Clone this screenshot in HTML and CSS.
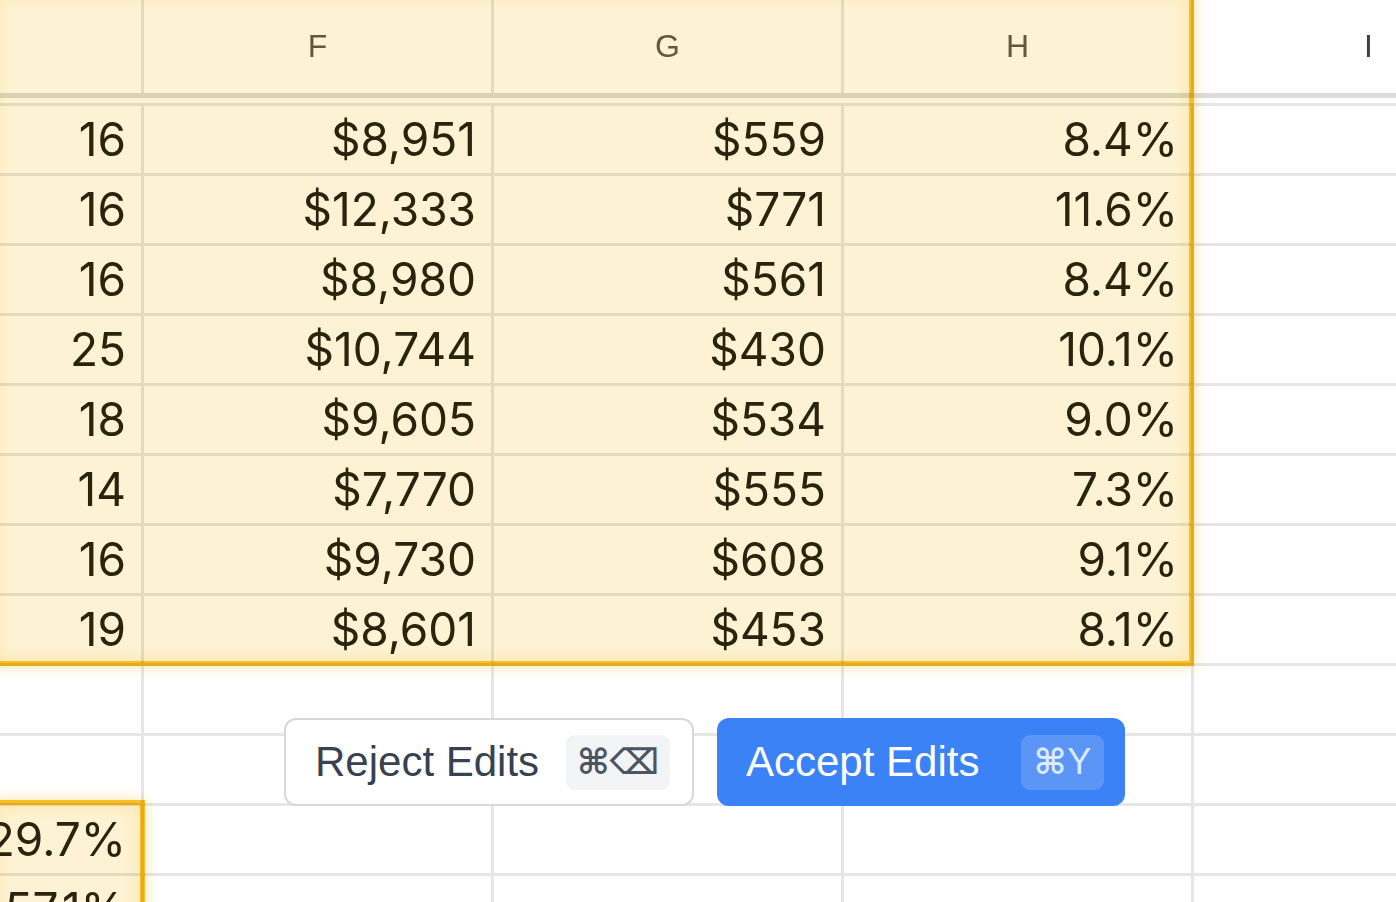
FILE: index.html
```html
<!DOCTYPE html>
<html>
<head>
<meta charset="utf-8">
<link rel="stylesheet" href="styles.css">
</head>
<body>
<div class="sheet">
  <div class="hdr-row">
    <div class="cell c-e"></div>
    <div class="cell c-f hsel">F</div>
    <div class="cell c-g hsel">G</div>
    <div class="cell c-h hsel">H</div>
    <div class="cell c-i">I</div>
  </div>
  <div class="hdr-gap"></div>
  <div class="row"><div class="cell c-e">16</div><div class="cell c-f">$8,951</div><div class="cell c-g">$559</div><div class="cell c-h">8.4%</div><div class="cell c-i"></div></div>
  <div class="row"><div class="cell c-e">16</div><div class="cell c-f">$12,333</div><div class="cell c-g">$771</div><div class="cell c-h">11.6%</div><div class="cell c-i"></div></div>
  <div class="row"><div class="cell c-e">16</div><div class="cell c-f">$8,980</div><div class="cell c-g">$561</div><div class="cell c-h">8.4%</div><div class="cell c-i"></div></div>
  <div class="row"><div class="cell c-e">25</div><div class="cell c-f">$10,744</div><div class="cell c-g">$430</div><div class="cell c-h">10.1%</div><div class="cell c-i"></div></div>
  <div class="row"><div class="cell c-e">18</div><div class="cell c-f">$9,605</div><div class="cell c-g">$534</div><div class="cell c-h">9.0%</div><div class="cell c-i"></div></div>
  <div class="row"><div class="cell c-e">14</div><div class="cell c-f">$7,770</div><div class="cell c-g">$555</div><div class="cell c-h">7.3%</div><div class="cell c-i"></div></div>
  <div class="row"><div class="cell c-e">16</div><div class="cell c-f">$9,730</div><div class="cell c-g">$608</div><div class="cell c-h">9.1%</div><div class="cell c-i"></div></div>
  <div class="row"><div class="cell c-e">19</div><div class="cell c-f">$8,601</div><div class="cell c-g">$453</div><div class="cell c-h">8.1%</div><div class="cell c-i"></div></div>
  <div class="row"><div class="cell c-e"></div><div class="cell c-f"></div><div class="cell c-g"></div><div class="cell c-h"></div><div class="cell c-i"></div></div>
  <div class="row"><div class="cell c-e"></div><div class="cell c-f"></div><div class="cell c-g"></div><div class="cell c-h"></div><div class="cell c-i"></div></div>
  <div class="row"><div class="cell c-e">29.7%</div><div class="cell c-f"></div><div class="cell c-g"></div><div class="cell c-h"></div><div class="cell c-i"></div></div>
  <div class="row"><div class="cell c-e">57.1%</div><div class="cell c-f"></div><div class="cell c-g"></div><div class="cell c-h"></div><div class="cell c-i"></div></div>

  <div class="sel sel-main"></div>
  <div class="sel sel-low"></div>

  <div class="actions">
    <button class="btn btn-reject">
      <span class="btn-label">Reject Edits</span>
      <span class="kbd kbd-reject">⌘⌫</span>
    </button>
    <button class="btn btn-accept">
      <span class="btn-label">Accept Edits</span>
      <span class="kbd kbd-accept">⌘<span class="kbd-y">Y</span></span>
    </button>
  </div>
</div>
</body>
</html>
```
FILE: styles.css
```css
html, body {
  margin: 0;
  padding: 0;
  background: #ffffff;
  overflow: hidden;
}

body {
  width: 1396px;
  height: 902px;
  font-family: "Liberation Sans", "DejaVu Sans", sans-serif;
}

.sheet {
  position: relative;
  width: 1396px;
  height: 902px;
  overflow: hidden;
}

.hdr-row {
  display: flex;
  height: 93px;
  border-bottom: 5px solid #dcdcdc;
}

.hdr-gap {
  height: 5px;
}

.row {
  display: flex;
  height: 67px;
  border-top: 3px solid #e6e6e6;
}

.cell {
  flex: none;
  box-sizing: border-box;
  display: flex;
  justify-content: flex-end;
  align-items: center;
  border-right: 3px solid #e6e6e6;
  padding-right: 15px;
  font-family: Inter, "Liberation Sans", sans-serif;
  font-size: 46px;
  line-height: 67px;
  color: #2a2410;
  white-space: nowrap;
  overflow: hidden;
}

.c-e { width: 144px; }
.c-f { width: 350px; }
.c-g { width: 350px; }
.c-h { width: 350px; padding-right: 13px; }
.c-i { width: 400px; }

.hdr-row .cell {
  justify-content: center;
  padding: 0;
  font-family: "Liberation Sans", sans-serif;
  font-size: 32px;
  line-height: 93px;
  color: #374151;
}

.hdr-row .cell.c-i {
  justify-content: flex-start;
  padding-left: 170px;
  border-right: none;
}

.hdr-row .hsel {
  color: #635c47;
}

.sel {
  position: absolute;
  box-sizing: border-box;
  border: 5px solid #fbbf24;
  background: #fdf3d4;
  mix-blend-mode: multiply;
  box-shadow: 0 0 12px rgba(251, 191, 36, 0.45), inset 0 0 18px rgba(251, 191, 36, 0.28);
  pointer-events: none;
}

.sel-main {
  left: -10px;
  top: -10px;
  width: 1204px;
  height: 676px;
}

.sel-low {
  left: -10px;
  top: 800px;
  width: 155px;
  height: 200px;
}

.actions {
  position: absolute;
  left: 284px;
  top: 718px;
  display: flex;
  gap: 23px;
}

.btn {
  box-sizing: border-box;
  height: 88px;
  display: flex;
  align-items: center;
  border-radius: 12px;
  font-family: "Liberation Sans", "DejaVu Sans", sans-serif;
  font-size: 42px;
  margin: 0;
  cursor: pointer;
}

.btn-reject {
  width: 410px;
  padding: 0 22px 0 29px;
  background: #ffffff;
  border: 2px solid #d4d7dc;
  color: #374151;
}

.btn-accept {
  width: 408px;
  padding: 0 21px 0 29px;
  background: #3b82f6;
  border: none;
  color: #ffffff;
}

.btn-label {
  flex: 1;
  text-align: left;
  white-space: nowrap;
}

.kbd {
  height: 55px;
  border-radius: 9px;
  display: flex;
  align-items: center;
  justify-content: center;
  font-family: "DejaVu Sans", "Liberation Sans", sans-serif;
  font-size: 35px;
  font-weight: bold;
}

.kbd-reject {
  width: 104px;
  background: #f3f4f6;
  color: #4b5563;
}

.kbd-accept {
  width: 83px;
  background: #5b96f7;
  color: #dbeafe;
}

.kbd-y {
  font-family: "Liberation Sans", sans-serif;
  font-weight: normal;
  font-size: 36px;
  margin-left: 1px;
}
```
